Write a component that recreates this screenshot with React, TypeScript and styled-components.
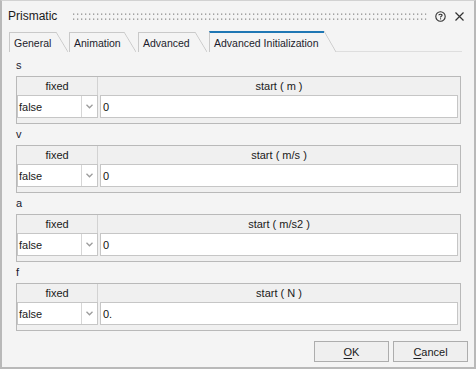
import React from 'react';
import styled, { createGlobalStyle } from 'styled-components';

const Global = createGlobalStyle`
  * { box-sizing: border-box; }
  body {
    margin: 0;
    background: #f4f4f4;
    font-family: "Liberation Sans", Arial, sans-serif;
  }
`;

const Window = styled.div`
  width: 476px;
  height: 369px;
  display: flex;
  flex-direction: column;
  background: #f4f4f4;
  border: 2px solid #b9b9b9;
  border-top: 1px solid #d2d2d2;
  color: #1a1a1a;
`;

const TitleBar = styled.div`
  height: 30px;
  display: flex;
  align-items: center;
  padding: 0 9px 0 6px;
`;

const Title = styled.span`
  font-size: 12px;
  color: #1a1a1a;
`;

const Grip = styled.svg`
  flex: 1;
  height: 7px;
  margin: 1px 8px 0 15px;
`;

const TitleButton = styled.span`
  display: flex;
  align-items: center;
  justify-content: center;
  width: 11px;
  height: 11px;
  & + & { margin-left: 8px; }
`;

const TabBar = styled.div`
  height: 21px;
  display: flex;
  align-items: flex-end;
  padding-left: 7px;
`;

const Tab = styled.div<{ $w: number; $gap: number; $active?: boolean }>`
  position: relative;
  width: ${p => p.$w}px;
  height: ${p => (p.$active ? 21 : 20)}px;
  margin-right: ${p => p.$gap}px;
  padding-left: 4px;
  display: flex;
  align-items: center;
  border-left: 1px solid #c9c9c9;
  border-top: ${p => (p.$active ? '2px solid #1f77b4' : '1px solid #c9c9c9')};
  font-size: 10.5px;
  color: #1c1c2c;
  white-space: nowrap;

  &::after {
    content: '';
    position: absolute;
    left: 100%;
    top: ${p => (p.$active ? -2 : -1)}px;
    width: 12px;
    height: calc(100% + ${p => (p.$active ? 2 : 1)}px);
    background: linear-gradient(
      to top right,
      transparent calc(50% - 0.8px),
      #cbcbcb 50%,
      transparent calc(50% + 0.8px)
    );
  }
`;

const TabLine = styled.div`
  flex: 1;
  height: 100%;
  margin-right: 12px;
  border-bottom: 1px solid #dedede;
`;

const Panel = styled.div`
  flex: 1;
  padding: 6px 13px 0 14px;
  display: flex;
  flex-direction: column;
`;

const Section = styled.section`
  display: flex;
  flex-direction: column;
  & + & { margin-top: 3px; }
`;

const VarName = styled.div`
  height: 14px;
  line-height: 14px;
  margin-bottom: 4px;
  font-size: 11px;
  color: #1a1a30;
`;

const Table = styled.div`
  border: 1px solid #b9b9b9;
  background: #f0f0f0;
  padding-bottom: 5px;
`;

const HeadRow = styled.div`
  display: grid;
  grid-template-columns: 81px 1fr;
  height: 18px;
`;

const HeadCell = styled.div`
  display: flex;
  align-items: center;
  justify-content: center;
  font-size: 11px;
  color: #1a1a1a;
  &:first-child { border-right: 1px solid #d2d2d2; }
`;

const DataRow = styled.div`
  display: grid;
  grid-template-columns: 81px 1fr;
  column-gap: 2px;
  padding-right: 2px;
  height: 23px;
`;

const Combo = styled.div`
  display: grid;
  grid-template-columns: 1fr 15px;
  background: #fff;
  border: 1px solid #c6c6c6;
`;

const ComboText = styled.div`
  display: flex;
  align-items: center;
  padding-left: 1px;
  font-size: 11px;
  border-right: 1px solid #d6d6d6;
`;

const ComboArrow = styled.div`
  display: flex;
  align-items: center;
  justify-content: center;
`;

const ValueBox = styled.div`
  display: flex;
  align-items: center;
  padding-left: 2px;
  background: #fff;
  border: 1px solid #c6c6c6;
  font-size: 11px;
  color: #111;
`;

const ButtonRow = styled.div`
  display: flex;
  justify-content: flex-end;
  gap: 4px;
  padding: 0 6px 5px 0;
`;

const Button = styled.button`
  width: 75px;
  height: 21px;
  padding: 0;
  background: #efefef;
  border: 1px solid #adadad;
  font-family: inherit;
  font-size: 11px;
  color: #1a1a1a;
  u { text-decoration-thickness: 1px; text-underline-offset: 2px; }
`;

const Chevron = () => (
  <svg width="7" height="5" viewBox="0 0 7 5">
    <path d="M0.5 0.8 L3.5 3.8 L6.5 0.8" fill="none" stroke="#9c9c9c" strokeWidth="1.3" />
  </svg>
);

const rows = [
  { name: 's', unit: 'start ( m )', value: '0' },
  { name: 'v', unit: 'start ( m/s )', value: '0' },
  { name: 'a', unit: 'start ( m/s2 )', value: '0' },
  { name: 'f', unit: 'start ( N )', value: '0.' },
];

const tabs = [
  { label: 'General', w: 47, gap: 13 },
  { label: 'Animation', w: 55, gap: 14 },
  { label: 'Advanced', w: 57, gap: 14 },
];

export default function App() {
  return (
    <Window>
      <Global />
      <TitleBar>
        <Title>Prismatic</Title>
        <Grip>
          <defs>
            <pattern id="dots" width="4" height="5" patternUnits="userSpaceOnUse">
              <rect x="1" y="0.5" width="1.3" height="1.3" fill="#8e8e8e" />
            </pattern>
          </defs>
          <rect width="100%" height="7" fill="url(#dots)" />
        </Grip>
        <TitleButton>
          <svg width="11" height="11" viewBox="0 0 11 11">
            <circle cx="5.5" cy="5.5" r="4.7" fill="none" stroke="#333" strokeWidth="1.1" />
            <path d="M3.9 4.3 C3.9 2.9 7.1 2.9 7.1 4.3 C7.1 5.3 5.5 5.3 5.5 6.4" fill="none" stroke="#333" strokeWidth="1.1" />
            <rect x="5" y="7.3" width="1.1" height="1.1" fill="#333" />
          </svg>
        </TitleButton>
        <TitleButton>
          <svg width="9" height="9" viewBox="0 0 9 9">
            <path d="M0.5 0.5 L8.5 8.5 M8.5 0.5 L0.5 8.5" stroke="#333" strokeWidth="1.2" />
          </svg>
        </TitleButton>
      </TitleBar>

      <TabBar>
        {tabs.map(t => (
          <Tab key={t.label} $w={t.w} $gap={t.gap}>{t.label}</Tab>
        ))}
        <Tab $w={115} $gap={12} $active>Advanced Initialization</Tab>
        <TabLine />
      </TabBar>

      <Panel>
        {rows.map(r => (
          <Section key={r.name}>
            <VarName>{r.name}</VarName>
            <Table>
              <HeadRow>
                <HeadCell>fixed</HeadCell>
                <HeadCell>{r.unit}</HeadCell>
              </HeadRow>
              <DataRow>
                <Combo>
                  <ComboText>false</ComboText>
                  <ComboArrow><Chevron /></ComboArrow>
                </Combo>
                <ValueBox>{r.value}</ValueBox>
              </DataRow>
            </Table>
          </Section>
        ))}
      </Panel>

      <ButtonRow>
        <Button><u>O</u>K</Button>
        <Button><u>C</u>ancel</Button>
      </ButtonRow>
    </Window>
  );
}
